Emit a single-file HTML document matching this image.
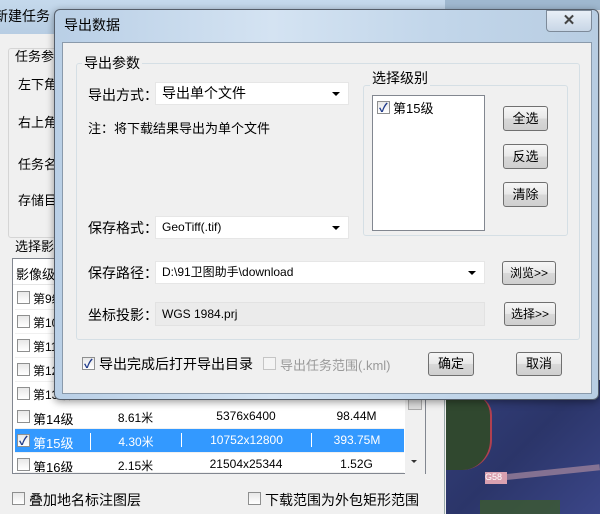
<!DOCTYPE html>
<html><head><meta charset="utf-8"><style>
*{box-sizing:border-box;margin:0;padding:0}
body{width:600px;height:514px;overflow:hidden;position:relative;background:#f0f0f0;font-family:"Liberation Sans","Noto Sans CJK SC",sans-serif;font-size:13px;color:#000}
.a{position:absolute}
.cb{position:absolute;width:13px;height:13px;border:1px solid #8e8f8f;background:linear-gradient(#e8e8e8,#fff)}
.cb.on::after{content:"✓";position:absolute;left:1px;top:-3px;font-size:12px;color:#1f3a8a;font-weight:bold}
.btn{position:absolute;border:1px solid #707070;border-radius:3px;background:linear-gradient(#f6f6f6 0%,#e8e8e8 50%,#d8d8d8 51%,#cfcfcf 100%);text-align:center;font-size:13px}
.fld{position:absolute;background:#fff;border:1px solid #d9d9d9;padding-left:6px;font-size:12px}
.arr{position:absolute;right:8px;top:9px;border-left:4px solid transparent;border-right:4px solid transparent;border-top:4px solid #000}
.grp{position:absolute;border:1px solid #d5dfe5;border-radius:3px}
.gl{position:absolute;background:#f0f0f0;padding:0 2px}
.row{position:absolute;left:15px;width:389px;height:24px;background:#fff;border-bottom:1px solid #f0f0f0}
.row span{position:absolute;top:4px;text-align:center;font-size:12px}
</style></head><body>
<div class="a" style="left:440px;top:0;width:160px;height:10px;background:#9fb8cf"></div>
<div class="a" style="left:0;top:0;width:445px;height:34px;background:linear-gradient(#c5d9ec,#b7cde3)"></div>
<div class="a" style="left:-6px;top:6px;font-size:14px">新建任务</div>
<div class="a" style="left:0;top:34px;width:445px;height:480px;background:#f0f0f0;border-right:1px solid #9aa"></div>
<!-- map -->
<div class="a" style="left:446px;top:380px;width:154px;height:134px;background:linear-gradient(135deg,#34407c,#2b3569 50%,#3b4688)"></div>
<div class="a" style="left:446px;top:395px;width:46px;height:75px;background:#30482f;border-right:2px solid #b04050;border-radius:0 20px 30px 0"></div>
<div class="a" style="left:490px;top:470px;width:110px;height:6px;background:#9a7f9a;opacity:.8;transform:rotate(-6deg)"></div>
<div class="a" style="left:480px;top:500px;width:80px;height:14px;background:#3c5a30;opacity:.8"></div>
<div class="a" style="left:485px;top:472px;width:22px;height:12px;background:#d9a0b0;font-size:9px;color:#fff">G58</div>
<div class="grp" style="left:8px;top:48px;width:420px;height:190px;border-color:#d5d5d5"></div>
<div class="a" style="left:15px;top:46px">任务参数</div>
<div class="a" style="left:18px;top:74px">左下角</div>
<div class="a" style="left:18px;top:112px">右上角</div>
<div class="a" style="left:18px;top:154px">任务名</div>
<div class="a" style="left:18px;top:190px">存储目</div>
<div class="a" style="left:15px;top:236px">选择影像</div>
<div class="a" style="left:12px;top:258px;width:414px;height:216px;border:1px solid #828790;background:#fff"></div>
<div class="a" style="left:13px;top:259px;width:412px;height:26px;background:#fff;border-bottom:1px solid #e5e5e5"></div>
<div class="a" style="left:16px;top:264px">影像级别</div>
<div class="a" style="left:405px;top:286px;width:20px;height:188px;background:#f0f0f0"></div>
<div class="a" style="left:408px;top:396px;width:14px;height:14px;background:#ddd;border:1px solid #aaa"></div>
<div class="a" style="left:411px;top:460px;border-left:3px solid transparent;border-right:3px solid transparent;border-top:3px solid #333"></div>
<div class="row" style="top:286px"><div class="cb" style="left:2px;top:5px"></div><span style="left:18px">第9级</span></div>
<div class="row" style="top:310px"><div class="cb" style="left:2px;top:5px"></div><span style="left:18px">第10级</span></div>
<div class="row" style="top:334px"><div class="cb" style="left:2px;top:5px"></div><span style="left:18px">第11级</span></div>
<div class="row" style="top:358px"><div class="cb" style="left:2px;top:5px"></div><span style="left:18px">第12级</span></div>
<div class="row" style="top:382px"><div class="cb" style="left:2px;top:5px"></div><span style="left:18px">第13级</span></div>
<div class="row" style="top:405px"><div class="cb" style="left:2px;top:5px"></div><span style="left:18px;font-size:13px">第14级</span><span style="left:75px;width:91px">8.61米</span><span style="left:166px;width:130px">5376x6400</span><span style="left:296px;width:91px">98.44M</span></div>
<div class="row" style="top:429px;background:#3399ff;color:#fff"><div class="cb on" style="left:2px;top:5px"></div><span style="left:18px;font-size:13px">第15级</span><span style="left:75px;width:91px;border-left:1px solid #fff">4.30米</span><span style="left:166px;width:130px;border-left:1px solid #fff">10752x12800</span><span style="left:296px;width:91px;border-left:1px solid #fff">393.75M</span></div>
<div class="row" style="top:453px;height:20px;overflow:hidden"><div class="cb" style="left:2px;top:5px"></div><span style="left:18px;font-size:13px">第16级</span><span style="left:75px;width:91px">2.15米</span><span style="left:166px;width:130px">21504x25344</span><span style="left:296px;width:91px">1.52G</span></div>
<div class="cb" style="left:12px;top:492px"></div><div class="a" style="left:29px;top:490px;font-size:14px">叠加地名标注图层</div>
<div class="cb" style="left:248px;top:492px"></div><div class="a" style="left:265px;top:490px;font-size:14px">下载范围为外包矩形范围</div>

<div class="a" style="left:54px;top:9px;width:545px;height:391px;border:1px solid #555e6a;border-radius:6px;background:linear-gradient(90deg,#b9cfe6,#d4e3f2 40%,#c2d6ea 70%,#b8cde2);box-shadow:0 2px 8px rgba(0,0,0,.4)"></div>
<div class="a" style="left:64px;top:15px;font-size:14px">导出数据</div>
<div class="a" style="left:546px;top:10px;width:46px;height:22px;border:1px solid #7d8a99;border-radius:0 0 4px 4px;background:linear-gradient(#e8eff7,#c8d6e6);text-align:center;font-size:15px;font-weight:bold;color:#444;line-height:20px">✕</div>
<div class="a" style="left:62px;top:42px;width:530px;height:352px;background:#f0f0f0;border:1px solid #8a9aab"></div>
<div class="grp" style="left:76px;top:63px;width:504px;height:277px"></div>
<div class="gl" style="left:82px;top:53px;font-size:14px">导出参数</div>
<div class="a" style="left:88px;top:85px;font-size:14px">导出方式：</div>
<div class="fld" style="left:155px;top:82px;width:194px;height:23px;border-color:#e6e6e6;font-size:14px;line-height:21px">导出单个文件<div class="arr"></div></div>
<div class="a" style="left:88px;top:118px;font-size:13px">注：将下载结果导出为单个文件</div>
<div class="grp" style="left:363px;top:85px;width:205px;height:151px"></div>
<div class="gl" style="left:370px;top:68px;font-size:14px">选择级别</div>
<div class="a" style="left:372px;top:95px;width:113px;height:136px;background:#fff;border:1px solid #828790"></div>
<div class="cb on" style="left:377px;top:101px"></div><div class="a" style="left:393px;top:98px">第15级</div>
<div class="btn" style="left:503px;top:106px;width:45px;height:25px;line-height:23px">全选</div>
<div class="btn" style="left:503px;top:144px;width:45px;height:25px;line-height:23px">反选</div>
<div class="btn" style="left:503px;top:182px;width:45px;height:25px;line-height:23px">清除</div>
<div class="a" style="left:88px;top:218px;font-size:14px">保存格式：</div>
<div class="fld" style="left:155px;top:216px;width:194px;height:23px;border-color:#e6e6e6;line-height:21px">GeoTiff(.tif)<div class="arr"></div></div>
<div class="a" style="left:88px;top:263px;font-size:14px">保存路径：</div>
<div class="fld" style="left:155px;top:261px;width:330px;height:23px;border-color:#e6e6e6;line-height:21px">D:\91卫图助手\download<div class="arr"></div></div>
<div class="btn" style="left:502px;top:261px;width:54px;height:24px;line-height:22px;font-size:12px">浏览&gt;&gt;</div>
<div class="a" style="left:88px;top:305px;font-size:14px">坐标投影：</div>
<div class="fld" style="left:155px;top:302px;width:330px;height:24px;background:#ebebeb;border-color:#e2e2e2;line-height:22px">WGS 1984.prj</div>
<div class="btn" style="left:504px;top:302px;width:52px;height:24px;line-height:22px;font-size:12px">选择&gt;&gt;</div>
<div class="cb on" style="left:82px;top:357px"></div><div class="a" style="left:99px;top:354px;font-size:14px">导出完成后打开导出目录</div>
<div class="cb" style="left:263px;top:357px;border-color:#c5c5c5;background:#f4f4f4"></div><div class="a" style="left:280px;top:355px;color:#9a9a9a">导出任务范围(.kml)</div>
<div class="btn" style="left:428px;top:352px;width:46px;height:24px;line-height:22px">确定</div>
<div class="btn" style="left:516px;top:352px;width:46px;height:24px;line-height:22px">取消</div>
</body></html>
